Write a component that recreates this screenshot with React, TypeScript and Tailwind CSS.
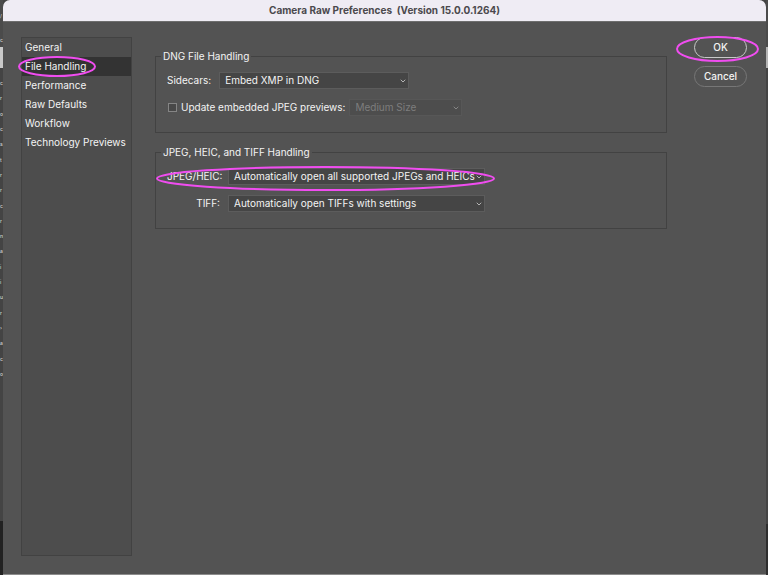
import { useState, type ReactNode } from "react";
import { ChevronDown } from "lucide-react";

const sections = ["General", "File Handling", "Performance", "Raw Defaults", "Workflow", "Technology Previews"];

// the panel behind the dialog, only its last few pixels stay visible
const behind = ["c", "r", "o", "c", "s", "t", "r", "r", "c", "r", "n", "a", "i", "i", "u", "r", "›", "a", "c", "o"];

function Ring({ className }: { className: string }) {
  return (
    <svg className={`absolute pointer-events-none overflow-visible ${className}`} aria-hidden="true">
      <ellipse cx="50%" cy="50%" rx="50%" ry="50%" fill="none" stroke="#f04df0" strokeWidth="2" />
    </svg>
  );
}

type PickerProps = { id: string; options: string[]; className: string; disabled?: boolean };

function Picker({ id, options, className, disabled }: PickerProps) {
  return (
    <div className={`relative ${className}`}>
      <select
        id={id}
        disabled={disabled}
        className="block w-full h-[17px] appearance-none border border-[#5c5c5c] bg-[#454545] pl-[5px] pr-2 leading-[15px] text-[#f4f4f4] disabled:bg-[#4d4d4d] disabled:border-[#575757] disabled:text-[#7d7d7d] disabled:opacity-100"
      >
        {options.map(o => <option key={o}>{o}</option>)}
      </select>
      <ChevronDown
        className={`absolute right-[2px] top-[5px] size-2 pointer-events-none ${disabled ? "text-[#858585]" : "text-[#b4b4b4]"}`}
        strokeWidth={3}
      />
    </div>
  );
}

function Group({ title, children }: { title: string; children: ReactNode }) {
  return (
    <fieldset className="h-[84px] border border-[#424242] pl-[5px]">
      <legend className="h-[14px] px-[2px] leading-[14px]">{title}</legend>
      <div className="flex flex-col gap-[10px] pl-[6px] pt-[9px]">{children}</div>
    </fieldset>
  );
}

export default function App() {
  const [active, setActive] = useState("File Handling");

  return (
    <div className="relative flex min-h-screen overflow-hidden bg-[#444444] font-['Inter','Liberation_Sans',sans-serif] text-[10px] text-[#f4f4f4]">
      <div className="flex w-[3px] shrink-0 flex-col bg-[#444444] text-[5px] font-medium leading-[15px] text-[#d0d0d0]" aria-hidden="true">
        <div className="h-[47px] bg-[#4b4b4b] pt-[9px]">
          <div className="h-6">/</div>
          <div>c</div>
        </div>
        <div className="h-[21px] bg-[#c9c9c9]" />
        <div className="mt-2 flex h-[306px] flex-col justify-between">
          {behind.map((c, i) => (
            <div key={i}>{c}</div>
          ))}
        </div>
        <div className="mt-[139px] flex-1 bg-[#222222]" />
      </div>

      <main className="flex min-w-0 flex-1 flex-col overflow-hidden rounded-t-[7px] border-b border-[#8c8c8c] bg-[#535353]">
        <h1 className="h-[22px] shrink-0 whitespace-pre border-b border-[#6e6e6e] bg-[#efecf4] text-center text-[10px] font-bold leading-[21px] text-[#4b494d]">
          {"Camera Raw Preferences  (Version 15.0.0.1264)"}
        </h1>

        <div className="flex flex-1 items-start pl-[18px] pr-[19px] pt-[15px] pb-[18px]">
          <nav className="w-[111px] shrink-0 self-stretch border border-[#424242] bg-[#4d4d4d]">
            {sections.map(s => (
              <div key={s} className="relative">
                <button
                  onClick={() => setActive(s)}
                  className={`block h-[19px] w-full whitespace-nowrap pl-[3px] text-left leading-[19px] ${s === active ? "bg-[#333333]" : ""}`}
                >
                  {s}
                </button>
                {s === "File Handling" && <Ring className="-left-[3px] top-0 h-[19px] w-[76px]" />}
              </div>
            ))}
          </nav>

          <div className="ml-[23px] mt-[12px] flex min-w-0 flex-1 flex-col gap-3">
            <Group title="DNG File Handling">
              <div className="flex items-center gap-2">
                <label htmlFor="sidecars">Sidecars:</label>
                <Picker id="sidecars" options={["Embed XMP in DNG"]} className="w-[190px]" />
              </div>
              <div className="flex items-center gap-1">
                <input
                  id="previews"
                  type="checkbox"
                  className="ml-[1px] size-[9px] appearance-none border border-[#858585] bg-[#484848] checked:bg-[#c4c4c4]"
                />
                <label htmlFor="previews">Update embedded JPEG previews:</label>
                <Picker id="size" options={["Medium Size"]} className="w-[113px]" disabled />
              </div>
            </Group>

            <Group title="JPEG, HEIC, and TIFF Handling">
              <div className="relative flex items-center gap-2">
                <label htmlFor="jpeg" className="w-[53px] text-right">JPEG/HEIC:</label>
                <Picker id="jpeg" options={["Automatically open all supported JPEGs and HEICs"]} className="w-[257px]" />
                <Ring className="-left-[10px] -top-[1px] h-[23px] w-[337px]" />
              </div>
              <div className="flex items-center gap-2">
                <label htmlFor="tiff" className="w-[53px] text-right">TIFF:</label>
                <Picker id="tiff" options={["Automatically open TIFFs with settings"]} className="w-[257px]" />
              </div>
            </Group>
          </div>

          <div className="ml-[27px] flex w-[53px] shrink-0 flex-col gap-2">
            <div className="relative">
              <button className="block h-[21px] w-full rounded-full border border-[#c8c8c8] font-medium">OK</button>
              <Ring className="-left-[17px] top-0 h-6 w-[81px]" />
            </div>
            <button className="h-[21px] w-full rounded-full border border-[#777777] font-medium">Cancel</button>
          </div>
        </div>
      </main>

      <div className="flex w-[2px] shrink-0 flex-col bg-[#444444]" aria-hidden="true">
        <div className="h-[47px] bg-[#4b4b4b]" />
        <div className="h-[21px] bg-[#b5b5b5]" />
        <div className="mt-[456px] flex-1 bg-[#2e2e2e]" />
      </div>
    </div>
  );
}
